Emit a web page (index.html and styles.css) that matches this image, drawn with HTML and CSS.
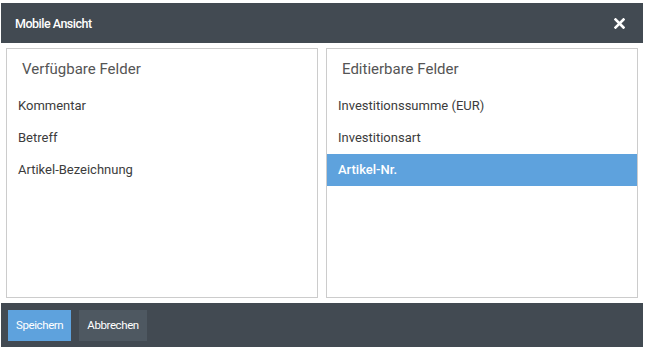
FILE: index.html
```html
<!DOCTYPE html>
<html lang="de">
<head>
    <meta charset="UTF-8">
    <title>Mobile Ansicht</title>
    <link rel="stylesheet" href="styles.css">
</head>
<body>
    <div class="dialog">
        <div class="dialog-header">
            <span class="dialog-title">Mobile Ansicht</span>
            <svg class="dialog-close" width="11" height="11" viewBox="0 0 11 11">
                <path d="M1.5 1.5 L9.5 9.5 M9.5 1.5 L1.5 9.5" stroke="#fff" stroke-width="2.6" stroke-linecap="square"/>
            </svg>
        </div>

        <div class="dialog-body">
            <div class="field-list">
                <div class="field-list-title">Verfügbare Felder</div>
                <div class="field-item">Kommentar</div>
                <div class="field-item">Betreff</div>
                <div class="field-item">Artikel-Bezeichnung</div>
            </div>
            <div class="field-list">
                <div class="field-list-title">Editierbare Felder</div>
                <div class="field-item">Investitionssumme (EUR)</div>
                <div class="field-item">Investitionsart</div>
                <div class="field-item selected">Artikel-Nr.</div>
            </div>
        </div>

        <div class="dialog-footer">
            <button class="btn btn-primary">Speichern</button>
            <button class="btn btn-secondary">Abbrechen</button>
        </div>
    </div>
</body>
</html>
```

FILE: styles.css
```css
body {
    margin: 0;
    font-family: Roboto, "Liberation Sans", sans-serif;
    background-color: #fff;
}
.dialog {
    width: 642px;
    margin: 3px 0 0 1px;
}
.dialog-header {
    height: 40px;
    background-color: #424a52;
    color: #fff;
    display: flex;
    align-items: center;
    justify-content: space-between;
    padding: 0 18px 0 14px;
}
.dialog-title {
    font-size: 12.5px;
    font-weight: 500;
    letter-spacing: -0.5px;
}
.dialog-close {
    display: block;
}
.dialog-body {
    display: flex;
    gap: 8px;
    padding: 5px;
}
.field-list {
    flex: 1;
    height: 248px;
    border: 1px solid #cccccc;
    background-color: #fff;
}
.field-list-title {
    font-size: 15px;
    color: #555;
    padding: 11px 0 0 15px;
    height: 30px;
}
.field-item {
    height: 32px;
    line-height: 32px;
    font-size: 13px;
    color: #3c3c3c;
    padding-left: 11px;
}
.field-item.selected {
    background-color: #5ea2dd;
    color: #fff;
    font-weight: 500;
}
.dialog-footer {
    height: 44px;
    background-color: #424a52;
    display: flex;
    align-items: center;
    gap: 8px;
    padding-left: 7px;
}
.btn {
    height: 31px;
    border: none;
    font-family: inherit;
    font-size: 11.5px;
    letter-spacing: -0.4px;
    color: #fff;
    padding: 0 8px;
}
.btn-primary {
    background-color: #5ea2dd;
}
.btn-secondary {
    background-color: #4e5861;
}
```
